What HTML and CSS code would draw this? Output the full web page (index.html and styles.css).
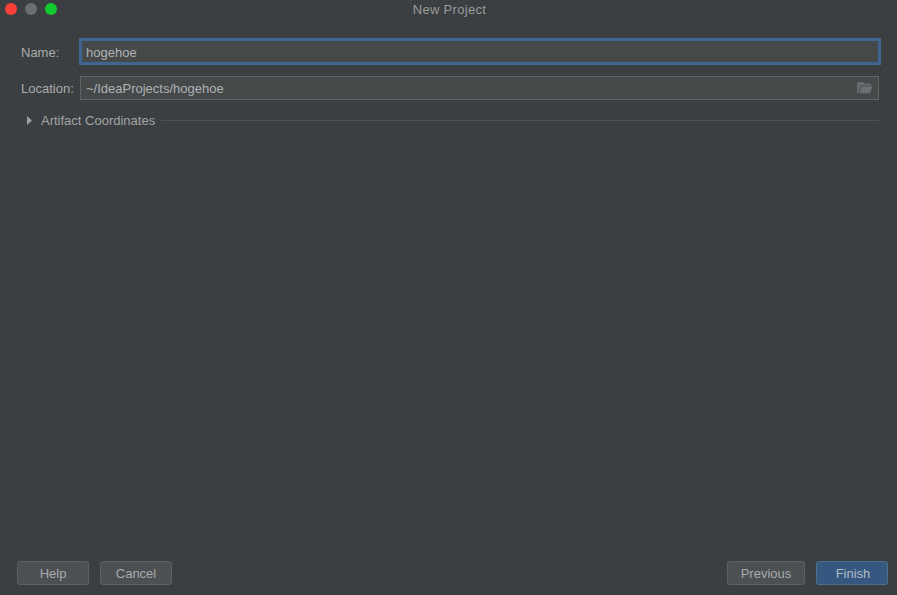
FILE: index.html
```html
<!DOCTYPE html>
<html lang="en">
<head>
<meta charset="utf-8">
<title>New Project</title>
<link rel="stylesheet" href="styles.css">
</head>
<body>
<div class="window">
  <header class="titlebar">
    <div class="lights">
      <span class="light red"></span>
      <span class="light gray"></span>
      <span class="light green"></span>
    </div>
    <div class="title">New Project</div>
  </header>
  <main class="form">
    <div class="row row-name">
      <label class="label">Name:</label>
      <div class="field focused">hogehoe</div>
    </div>
    <div class="row row-location">
      <label class="label">Location:</label>
      <div class="field">
        <span class="value">~/IdeaProjects/hogehoe</span>
        <svg class="folder" width="16" height="12" viewBox="0 0 16 12">
          <path d="M0 0h6l1.5 1.5H14V3.4H4L1.2 11H0z" fill="#666d70"/>
          <path d="M4.8 4.2H15.6l-2.6 7H2z" fill="#687073"/>
        </svg>
      </div>
    </div>
    <div class="section">
      <svg class="caret" width="5" height="9" viewBox="0 0 5 9"><path d="M0 0l5 4.5L0 9z" fill="#9c9ea0"/></svg>
      <span class="section-title">Artifact Coordinates</span>
      <span class="rule"></span>
    </div>
  </main>
  <footer class="actions">
    <div class="group">
      <button class="btn">Help</button>
      <button class="btn">Cancel</button>
    </div>
    <div class="group">
      <button class="btn prev">Previous</button>
      <button class="btn primary">Finish</button>
    </div>
  </footer>
</div>
</body>
</html>
```
FILE: styles.css
```css
* { box-sizing: border-box; }
html, body { margin: 0; height: 100%; }
body {
  background: #3c3f41;
  color: #a9abad;
  font-family: "Liberation Sans", Arial, sans-serif;
  font-size: 13px;
  overflow: hidden;
}
.window {
  width: 897px;
  height: 595px;
  display: flex;
  flex-direction: column;
}
.titlebar {
  height: 19px;
  position: relative;
  display: flex;
  align-items: center;
  justify-content: center;
}
.lights {
  position: absolute;
  left: 5px;
  top: 3px;
  display: flex;
  gap: 8px;
}
.light { width: 12px; height: 12px; border-radius: 50%; }
.red { background: #fb3f3a; }
.gray { background: #6c6e70; }
.green { background: #12cc2f; }
.title { color: #9a9c9e; font-size: 13px; font-weight: 500; letter-spacing: 0.3px; padding-left: 2px; }
.form {
  flex: 1;
  padding: 20px 18px 0 21px;
  display: flex;
  flex-direction: column;
}
.row { display: flex; align-items: center; }
.row-name { height: 26px; }
.row-location { height: 24px; margin-top: 11px; }
.label { width: 59px; flex: none; }
.field {
  flex: 1;
  height: 24px;
  background: #45494a;
  border: 1px solid #646464;
  padding: 0 5px;
  display: flex;
  align-items: center;
  justify-content: space-between;
  color: #b0b2b4;
}
.focused {
  height: 27px;
  margin: -1px -2px 0 -1px;
  border: 3px solid #3e6690;
  padding: 1px 4px 0;
}
.section {
  display: flex;
  align-items: center;
  height: 16px;
  margin-top: 12px;
  padding-left: 6px;
}
.section-title { margin-left: 9px; color: #a2a4a6; }
.rule { flex: 1; height: 1px; background: #515151; margin-left: 6px; margin-top: 1px; }
.actions {
  height: 34px;
  padding: 0 9px 10px 17px;
  display: flex;
  justify-content: space-between;
  flex: none;
}
.group { display: flex; gap: 11px; }
.btn {
  width: 72px;
  height: 24px;
  padding: 0;
  font: inherit;
  color: #a9abad;
  background: #4c5052;
  border: 1px solid #5e6060;
  border-radius: 3px;
}
.prev { width: 78px; }
.primary {
  background: #365880;
  border-color: #4c708c;
  color: #b4bcc4;
  padding-left: 2px;
}
```
